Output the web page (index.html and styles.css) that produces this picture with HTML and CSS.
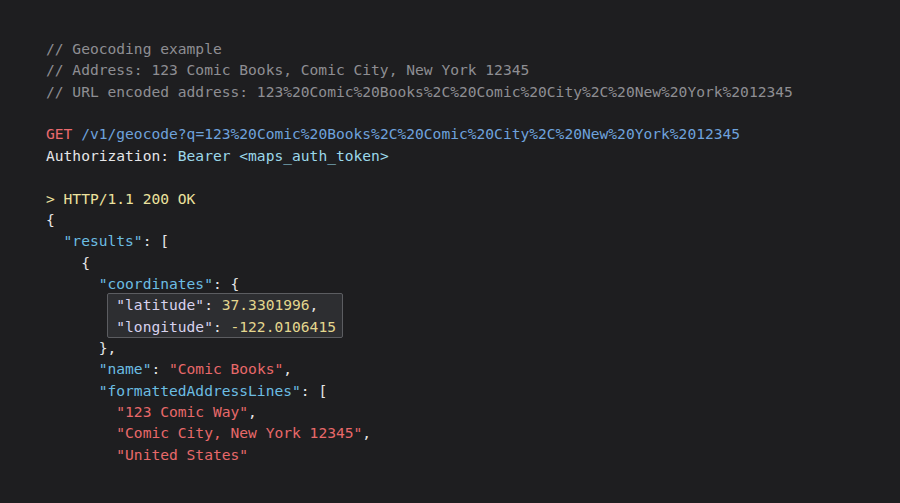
FILE: index.html
```html
<!DOCTYPE html>
<html>
<head>
<meta charset="utf-8">
<link rel="stylesheet" href="styles.css">
</head>
<body>
<div class="code">
<div class="ln c">// Geocoding example</div>
<div class="ln c">// Address: 123 Comic Books, Comic City, New York 12345</div>
<div class="ln c">// URL encoded address: 123%20Comic%20Books%2C%20Comic%20City%2C%20New%20York%2012345</div>
<div class="ln"> </div>
<div class="ln"><span class="m">GET</span> <span class="u">/v1/geocode?q=123%20Comic%20Books%2C%20Comic%20City%2C%20New%20York%2012345</span></div>
<div class="ln">Authorization: <span class="h">Bearer &lt;maps_auth_token&gt;</span></div>
<div class="ln"> </div>
<div class="ln y">&gt; HTTP/1.1 200 OK</div>
<div class="ln">{</div>
<div class="ln">  <span class="k">"results"</span>: [</div>
<div class="ln">    {</div>
<div class="ln">      <span class="k">"coordinates"</span>: {</div>
<div class="hl"><div class="ln"><span class="kh">"latitude"</span>: <span class="n">37.3301996</span>,</div><div class="ln"><span class="kh">"longitude"</span>: <span class="n">-122.0106415</span></div></div>
<div class="ln">      },</div>
<div class="ln">      <span class="k">"name"</span>: <span class="s">"Comic Books"</span>,</div>
<div class="ln">      <span class="k">"formattedAddressLines"</span>: [</div>
<div class="ln">        <span class="s">"123 Comic Way"</span>,</div>
<div class="ln">        <span class="s">"Comic City, New York 12345"</span>,</div>
<div class="ln">        <span class="s">"United States"</span></div>
</div>
</body>
</html>
```
FILE: styles.css
```css
html, body {
  margin: 0;
  background: #1e1e20;
}
body {
  width: 900px;
  height: 503px;
  overflow: hidden;
}
.code {
  padding: 38px 0 0 46px;
  font-family: "DejaVu Sans Mono", "Liberation Mono", monospace;
  font-size: 14.6px;
  line-height: 21.37px;
  color: #e6e6e8;
}
.ln {
  height: 21.37px;
  white-space: pre;
}
.c { color: #8e8e93; }
.m { color: #ea6a6e; }
.u { color: #6ea2dc; }
.h { color: #9bd8ea; }
.y { color: #ece29e; }
.k { color: #6cbde2; }
.kh { color: #d8d2ee; }
.s { color: #e8696a; }
.n { color: #e4d78e; }
.hl {
  display: block;
  width: max-content;
  margin: -1px 0 -1px calc(8ch - 9px);
  padding: 0 6px 0 8px;
  background: #2d2e31;
  border: 1px solid #5c5d61;
  border-radius: 2px;
}
```
